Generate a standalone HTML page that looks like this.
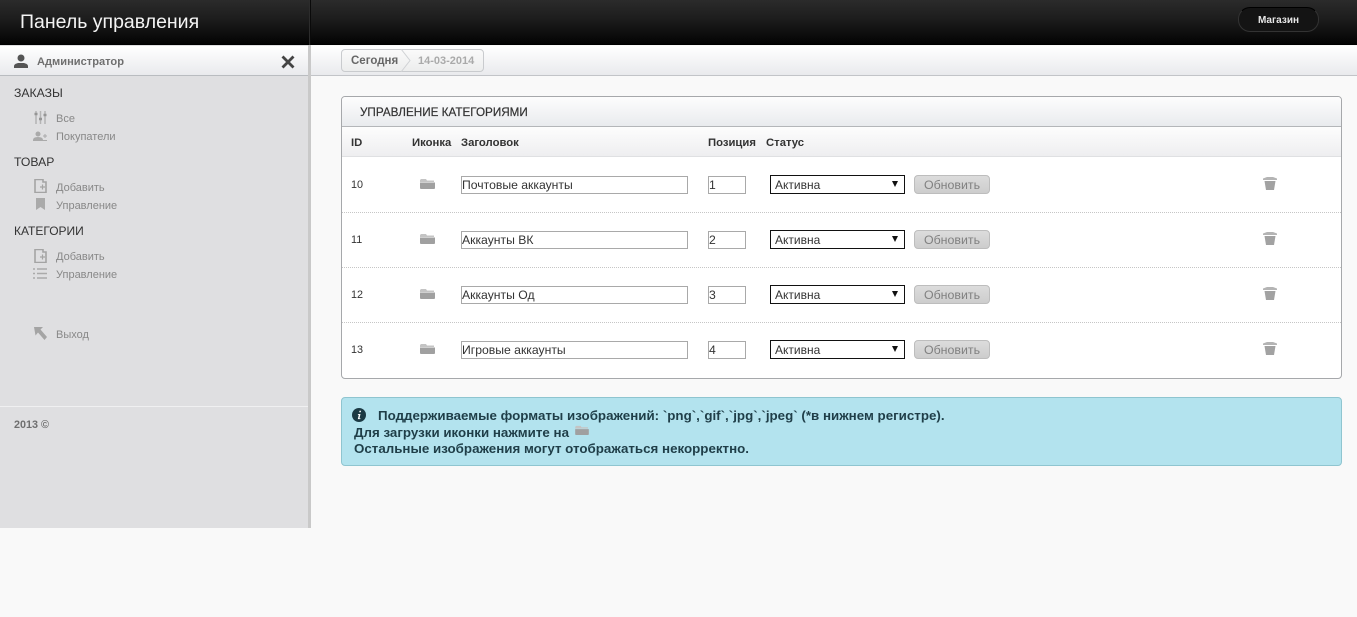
<!DOCTYPE html>
<html lang="ru"><head><meta charset="utf-8"><title>Панель управления</title>
<style>
*{box-sizing:border-box}
html,body{margin:0;padding:0;width:1357px;height:617px;overflow:hidden;background:#f9f9f9;font-family:"Liberation Sans",Arial,sans-serif}
.a{position:absolute;white-space:nowrap}
#top{left:0;top:0;width:1357px;height:45px;background:linear-gradient(#2b2b2b 0,#1c1c1c 45%,#030303 100%);border-bottom:1px solid #000}
#logo{left:20px;top:10px;font-size:19.500px;color:#f4f4f4;line-height:24px}
#sep{left:309px;top:0;width:2px;height:45px;background:#2c2c2c;border-right:1px solid #0a0a0a}
#shop{left:1238px;top:7px;width:81px;height:25px;border-radius:12px;background:#141414;border:1px solid #333;border-top-color:#000;color:#e8e8e8;font-size:10px;font-weight:bold;text-align:center;line-height:26px}
#side{left:0;top:45px;width:311px;height:483px;background:#dfdfe1;border-right:3px solid #c9c9c9}
#user{left:0;top:46px;width:308px;height:30px;background:linear-gradient(#fff,#e9eaed);border-bottom:1px solid #b9bcc0}
#crumbbar{left:311px;top:46px;width:1046px;height:30px;background:linear-gradient(#fff,#e9eaed);border-bottom:1px solid #c2c4c8}
#crumb{left:341px;top:49px;width:143px;height:23px;border:1px solid #c9cbce;border-radius:4px;background:linear-gradient(#fafafa,#eceded)}
.h{left:14px;font-size:12.200px;color:#333;line-height:14px}
.l{left:56px;font-size:11px;color:#888;line-height:12px}
svg{position:absolute;display:block}
#box{left:341px;top:96px;width:1001px;height:283px;background:#fff;border:1px solid #a6a8ab;border-radius:4px}
#bh{left:342px;top:97px;width:999px;height:30px;background:linear-gradient(#fdfdfd,#e9ebee);border-bottom:1px solid #b4b6b9;border-radius:3px 3px 0 0}
#th{left:342px;top:127px;width:999px;height:30px;background:linear-gradient(#fdfdfd,#eeeef0);border-bottom:1px solid #dfe0e2}
.t{font-size:11.300px;font-weight:bold;color:#333;top:137px;line-height:12px}
.d{left:342px;width:999px;height:0;border-top:1px dotted #c6c6c6}
.id{left:351px;font-size:10.800px;color:#333;line-height:12px}
.inp{height:18px;border:1px solid #a9a9a9;background:#fff;font-size:12.200px;color:#333;line-height:16px;padding-left:0}
.sel{left:770px;width:135px;height:19px;border:1px solid #111;background:#fff;font-size:12px;color:#333;line-height:19px;padding-left:4px}
.sel i{position:absolute;right:6px;top:5px;width:0;height:0;border-left:3px solid transparent;border-right:3px solid transparent;border-top:6px solid #111}
.btn{left:914px;width:76px;height:19px;border:1px solid #bdbdbd;border-radius:4px;background:linear-gradient(#dcdcdc,#cdcdcd);font-size:12.400px;color:#808080;text-align:center;line-height:18px}
#info{left:341px;top:397px;width:1001px;height:69px;background:#b3e3ee;border:1px solid #8fc5d0;border-radius:4px}
.m{font-size:13.350px;font-weight:bold;color:#1f3e48;line-height:16px}
</style></head><body>
<svg width="0" height="0" style="position:absolute"><defs>
<symbol id="folder" viewBox="0 0 15 11"><path d="M1 1h5l1 1.500h7v1.500H0V2z" fill="#c4c4c4"/><path d="M0 4.500h15V10q0 1-1 1H1q-1 0-1-1z" fill="#a0a0a0"/></symbol>
<symbol id="trash" viewBox="0 0 14 13"><path d="M0 1.500L4 0h6l4 1.500V3H0z" fill="#b4b4b4"/><path d="M1.500 4h11l-1.500 9H3z" fill="#a2a2a2"/></symbol>
<symbol id="add" viewBox="0 0 13 14"><path d="M1 .500h8V3h3v10.500H1z" fill="none" stroke="#a4a4a4" stroke-width="1.600"/><path d="M6 8h5M8.500 5.500v5" stroke="#a4a4a4" stroke-width="1.200"/></symbol>
</defs></svg>

<div class="a" id="top"></div><div class="a" id="sep"></div>
<div class="a" id="logo">Панель управления</div>
<div class="a" id="shop">Магазин</div>

<div class="a" id="side"></div>
<div class="a" id="user"></div>
<div class="a" id="crumbbar"></div>
<svg style="left:14px;top:54px" width="14" height="14" viewBox="0 0 14 14"><circle cx="7" cy="4" r="3.500" fill="#555"/><path d="M0 14v-2q0-2 4-3h6q4 1 4 3v2z" fill="#555"/></svg>
<div class="a" style="left:37px;top:55px;font-size:11.100px;font-weight:bold;color:#6f6f6f;line-height:14px">Администратор</div>
<svg style="left:281px;top:55px" width="14" height="14" viewBox="0 0 14 14"><path d="M1.500 1.500l11 11M12.500 1.500l-11 11" stroke="#444" stroke-width="2.800"/></svg>

<div class="a h" style="top:86px">ЗАКАЗЫ</div>
<svg style="left:34px;top:111px" width="13" height="13" viewBox="0 0 13 13"><path d="M2 0v13M6.500 0v13M11 0v13" stroke="#b4b4b4" stroke-width="1.500"/><path d="M.5 3h3M5 8h3M9.500 4h3" stroke="#959595" stroke-width="2.500"/></svg>
<div class="a l" style="top:113px">Все</div>
<svg style="left:33px;top:131px" width="14" height="10" viewBox="0 0 14 10"><circle cx="5" cy="3" r="2.500" fill="#aaa"/><path d="M0 9q0-3 5-3t5 3z" fill="#aaa"/><path d="M0 9.500h14M10 5h4M12 3v4" stroke="#aaa"/></svg>
<div class="a l" style="top:131px">Покупатели</div>

<div class="a h" style="top:155px">ТОВАР</div>
<svg style="left:34px;top:179px" width="13" height="14"><use href="#add"/></svg>
<div class="a l" style="top:182px">Добавить</div>
<svg style="left:36px;top:198px" width="9" height="12" viewBox="0 0 9 12"><path d="M0 0h9v12L4.500 9 0 12z" fill="#aaa"/></svg>
<div class="a l" style="top:200px">Управление</div>

<div class="a h" style="top:224px;font-size:12px">КАТЕГОРИИ</div>
<svg style="left:34px;top:249px" width="13" height="14"><use href="#add"/></svg>
<div class="a l" style="top:251px">Добавить</div>
<svg style="left:33px;top:268px" width="14" height="11" viewBox="0 0 14 11"><path d="M0 1h2M4 1h10M0 5.500h2M4 5.500h10M0 10h2M4 10h10" stroke="#aaa" stroke-width="1.500"/></svg>
<div class="a l" style="top:269px">Управление</div>

<svg style="left:34px;top:327px" width="13" height="13" viewBox="0 0 13 13"><path d="M0 0h9L6.500 2.500 13 10l-2.500 3L4 5.500 1.500 8.500z" fill="#a4a4a4"/></svg>
<div class="a l" style="top:329px">Выход</div>

<div class="a" style="left:0;top:406px;width:308px;height:1px;background:#f0f0f1"></div>
<div class="a" style="left:14px;top:419px;font-size:10.800px;font-weight:bold;color:#6f6f6f;line-height:12px">2013 ©</div>

<div class="a" id="crumb"></div>
<svg style="left:398px;top:49px" width="16" height="23" viewBox="0 0 16 23"><path d="M3 0l9 11.500L3 23" fill="none" stroke="#d0d2d5"/></svg>
<div class="a" style="left:351px;top:55px;font-size:11.500px;font-weight:bold;color:#666;line-height:13px">Сегодня</div>
<div class="a" style="left:418px;top:55px;font-size:11px;font-weight:bold;color:#aaa;line-height:13px">14-03-2014</div>

<div class="a" id="box"></div>
<div class="a" id="bh"></div>
<div class="a" style="left:360px;top:106px;font-size:11.700px;color:#333;line-height:14px;-webkit-text-stroke:.2px #333">УПРАВЛЕНИЕ КАТЕГОРИЯМИ</div>
<div class="a" id="th"></div>
<div class="a t" style="left:351px">ID</div>
<div class="a t" style="left:412px">Иконка</div>
<div class="a t" style="left:461px">Заголовок</div>
<div class="a t" style="left:708px">Позиция</div>
<div class="a t" style="left:766px">Статус</div>

<div class="a d" style="top:212px"></div>
<div class="a d" style="top:267px"></div>
<div class="a d" style="top:322px"></div>

<div class="a id" style="top:179px">10</div>
<svg style="left:420px;top:178px" width="15" height="11"><use href="#folder"/></svg>
<div class="a inp" style="left:461px;top:176px;width:227px">Почтовые аккаунты</div>
<div class="a inp" style="left:708px;top:176px;width:38px">1</div>
<div class="a sel" style="top:175px">Активна<i></i></div>
<div class="a btn" style="top:175px">Обновить</div>
<svg style="left:1263px;top:177px" width="14" height="13"><use href="#trash"/></svg>

<div class="a id" style="top:234px">11</div>
<svg style="left:420px;top:233px" width="15" height="11"><use href="#folder"/></svg>
<div class="a inp" style="left:461px;top:231px;width:227px">Аккаунты ВК</div>
<div class="a inp" style="left:708px;top:231px;width:38px">2</div>
<div class="a sel" style="top:230px">Активна<i></i></div>
<div class="a btn" style="top:230px">Обновить</div>
<svg style="left:1263px;top:232px" width="14" height="13"><use href="#trash"/></svg>

<div class="a id" style="top:289px">12</div>
<svg style="left:420px;top:288px" width="15" height="11"><use href="#folder"/></svg>
<div class="a inp" style="left:461px;top:286px;width:227px">Аккаунты Од</div>
<div class="a inp" style="left:708px;top:286px;width:38px">3</div>
<div class="a sel" style="top:285px">Активна<i></i></div>
<div class="a btn" style="top:285px">Обновить</div>
<svg style="left:1263px;top:287px" width="14" height="13"><use href="#trash"/></svg>

<div class="a id" style="top:344px">13</div>
<svg style="left:420px;top:343px" width="15" height="11"><use href="#folder"/></svg>
<div class="a inp" style="left:461px;top:341px;width:227px">Игровые аккаунты</div>
<div class="a inp" style="left:708px;top:341px;width:38px">4</div>
<div class="a sel" style="top:340px">Активна<i></i></div>
<div class="a btn" style="top:340px">Обновить</div>
<svg style="left:1263px;top:342px" width="14" height="13"><use href="#trash"/></svg>

<div class="a" id="info"></div>
<svg style="left:352px;top:408px" width="14" height="14" viewBox="0 0 14 14"><circle cx="7" cy="7" r="7" fill="#1c3a44"/><path d="M7.500 2.800h1.600l-.3 1.500H7.200zM6 6h2.500l-1 4.200h1l-.2.900H5.800l1-4.200H5.800z" fill="#fff"/></svg>
<div class="a m" style="left:378px;top:408px">Поддерживаемые форматы изображений: `png`,`gif`,`jpg`,`jpeg` (*в нижнем регистре).</div>
<div class="a m" style="left:354px;top:425px">Для загрузки иконки нажмите на</div>
<svg style="left:575px;top:425px" width="14" height="10"><use href="#folder"/></svg>
<div class="a m" style="left:354px;top:441px">Остальные изображения могут отображаться некорректно.</div>
</body></html>
